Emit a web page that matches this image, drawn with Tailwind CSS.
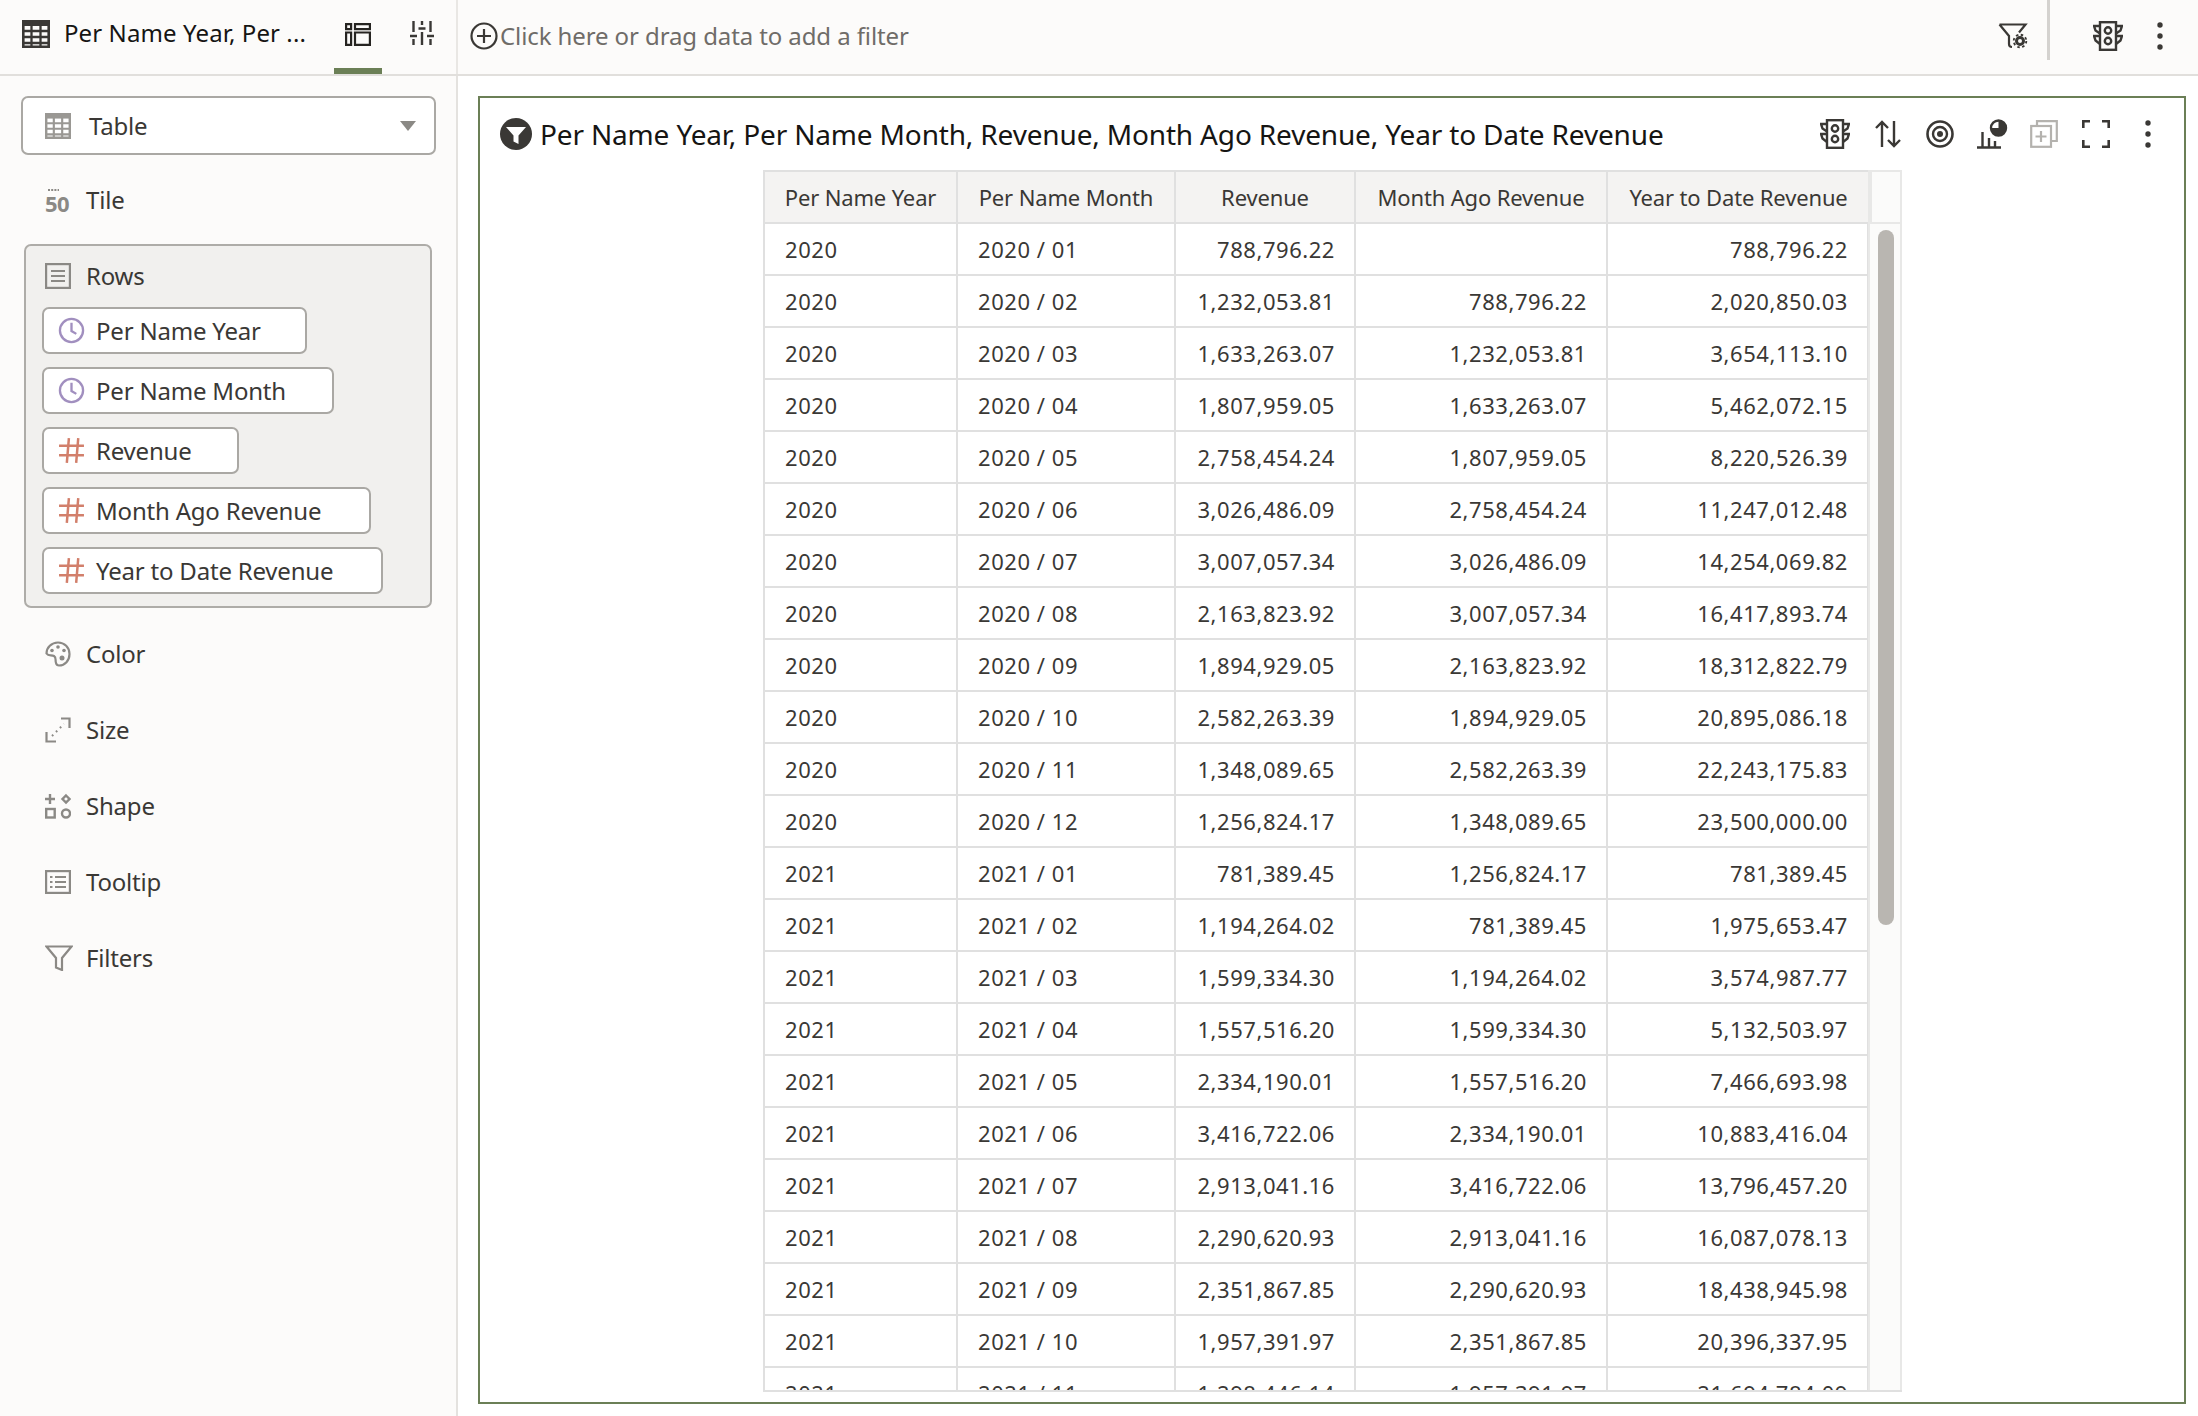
<!DOCTYPE html>
<html lang="en">
<head>
    <meta charset="UTF-8">
    <title>Per Name Year, Per Name Month, Revenue</title>
    <script src="https://cdn.jsdelivr.net/npm/@tailwindcss/browser@4"></script>
</head>
<body class="bg-white font-['Noto_Sans',sans-serif] text-[#3a3835]">
    <!-- shared icons -->
    <svg class="hidden">
        <symbol id="traffic" viewBox="0 0 30 30" fill="none" stroke="currentColor" stroke-width="2.400">
            <rect x="7" y="1.200" width="16" height="27.600"/>
            <circle cx="15" cy="9.500" r="3.200"/>
            <circle cx="15" cy="20" r="3.200"/>
            <path d="M7 5H1l1.500 4.500L7 12.500M23 5h6l-1.500 4.500L23 12.500M7 15H1l1.500 4.500L7 23M23 15h6l-1.500 4.500L23 23"/>
        </symbol>
        <symbol id="kebab" viewBox="0 0 6 28" fill="currentColor">
            <circle cx="3" cy="3" r="2.700"/><circle cx="3" cy="14" r="2.700"/><circle cx="3" cy="25" r="2.700"/>
        </symbol>
        <symbol id="clock" viewBox="0 0 28 28" fill="none" stroke="#a18fbf" stroke-width="2.400">
            <circle cx="14" cy="14" r="12"/><path d="M14 6v8.500l5 3"/>
        </symbol>
        <symbol id="hash" viewBox="0 0 26 26" fill="none" stroke="#d27f6b" stroke-width="2.400">
            <path d="M10.500 1L8.500 25M19.500 1l-2 24M1 8.500h24M1 17.500h24"/>
        </symbol>
        <symbol id="grid" viewBox="0 0 28 28" fill="none" stroke="currentColor">
            <path stroke-width="2.600" d="M1.300 1.300h25.400v25.400H1.300z"/>
            <path stroke-width="4" d="M1 4h26"/>
            <path stroke-width="2.300" d="M1 11h26M1 17h26M1 23h26M9.500 1v26M18.500 1v26"/>
        </symbol>
    </svg>

    <div class="flex h-[1416px] w-[2198px] flex-col overflow-hidden">
        <!-- top bar -->
        <header class="flex h-[76px] shrink-0 border-b-2 border-[#e1dfdc] bg-[#fcfbfa]">
            <div class="flex h-full w-[458px] shrink-0 items-center border-r-2 border-[#e9e7e4] pl-[22px]">
                <svg class="mb-[6px] h-[28px] w-[28px] text-[#3a3835]"><use href="#grid"/></svg>
                <span class="mb-[9px] ml-[14px] w-[270px] whitespace-nowrap text-[24px] leading-none tracking-[0.1px] text-[#161513]">Per Name Year, Per ...</span>
                <div class="flex h-full w-[48px] items-center justify-center border-b-[6px] border-[#6b7f56]">
                    <svg class="h-[23px] w-[26px]" viewBox="0 0 26 23" fill="none" stroke="#262421" stroke-width="2.200">
                        <path d="M1.100 1.100h5v5h-5zM10 1.100h14.900v5H10zM1.100 9.500h5v12.400h-5zM10 9.500h14.900v12.400H10z"/>
                    </svg>
                </div>
                <svg class="mb-[8px] ml-[28px] h-[24px] w-[24px]" viewBox="0 0 24 24" fill="none" stroke="#3a3835" stroke-width="2.400">
                    <path d="M3.500 0v11M3.500 18v6M0 15h7M12 0v4M12 11v13M8.500 7.500h7M20.500 0v11M20.500 18v6M17 15h7"/>
                </svg>
            </div>
            <div class="flex flex-1 items-center pb-[2px] pl-[12px]">
                <svg class="h-[28px] w-[28px]" viewBox="0 0 28 28" fill="none" stroke="#3a3835" stroke-width="2.200">
                    <circle cx="14" cy="14" r="12.500"/><path d="M14 7v14M7 14h14"/>
                </svg>
                <span class="ml-[2px] flex-1 text-[24px] leading-none tracking-[-0.1px] text-[#6f6c68]">Click here or drag data to add a filter</span>
                <svg class="h-[26px] w-[30px]" viewBox="0 0 30 26" fill="none" stroke="#3a3835" stroke-width="2.200">
                    <path d="M1.500 1.500h26l-6.500 8M1.500 1.500L11 13v8c0 2 1 3 3 3"/>
                    <circle cx="22" cy="18" r="3.500" stroke-width="3"/>
                    <circle cx="22" cy="18" r="6.300" stroke-width="1.800" stroke-dasharray="2.500 2.450"/>
                </svg>
                <div class="ml-[19px] h-[60px] w-[3px] self-start bg-[#d4d2cf]"></div>
                <svg class="ml-[43px] h-[30px] w-[30px] text-[#3a3835]"><use href="#traffic"/></svg>
                <svg class="ml-[34px] mr-[35px] h-[28px] w-[6px] text-[#3a3835]"><use href="#kebab"/></svg>
            </div>
        </header>

        <div class="flex min-h-0 flex-1">
            <!-- grammar panel -->
            <aside class="flex w-[458px] shrink-0 flex-col border-r-2 border-[#e4e2df] bg-[#fcfbfa] pt-[20px] text-[24px] tracking-[-0.2px] text-[#3a3835]">
                <div class="ml-[21px] flex h-[59px] w-[415px] items-center rounded-[7px] border-2 border-[#aaa8a4] bg-white pl-[22px] pr-[18px]">
                    <svg class="h-[26px] w-[26px] text-[#9a9894]"><use href="#grid"/></svg>
                    <span class="ml-[18px] flex-1">Table</span>
                    <svg class="h-[10px] w-[16px]" viewBox="0 0 16 10" fill="#8b8985"><path d="M0 0h16l-8 10z"/></svg>
                </div>

                <div class="ml-[45px] mt-[18px] flex h-[54px] items-center">
                    <svg class="h-[30px] w-[30px]" viewBox="0 0 30 30">
                        <path d="M3 5h11" stroke="#8b8985" stroke-width="2" stroke-dasharray="2 1.200"/>
                        <text x="0" y="27" font-family="Noto Sans" font-weight="700" font-size="22" letter-spacing="-0.500" fill="#8b8985">50</text>
                    </svg>
                    <span class="ml-[11px]">Tile</span>
                </div>

                <section class="ml-[24px] mt-[17px] w-[408px] rounded-[7px] border-2 border-[#aeaca8] bg-[#f1f0ee] px-[16px] pb-[12px] pt-[3px]">
                    <div class="mb-[4px] flex h-[54px] items-center pl-[3px]">
                        <svg class="h-[26px] w-[26px]" viewBox="0 0 26 26" fill="none" stroke="#8b8985" stroke-width="2.200">
                            <rect x="1.100" y="1.100" width="23.800" height="23.800"/><path d="M6 8h14M6 13h14M6 18h14"/>
                        </svg>
                        <span class="ml-[15px]">Rows</span>
                    </div>
                    <div class="flex flex-col gap-[13px]">
                        <div class="flex h-[47px] w-[265px] items-center rounded-[7px] border-2 border-[#aaa8a4] bg-white pl-[14px]">
                            <svg class="h-[27px] w-[27px]"><use href="#clock"/></svg><span class="ml-[11px] whitespace-nowrap">Per Name Year</span>
                        </div>
                        <div class="flex h-[47px] w-[292px] items-center rounded-[7px] border-2 border-[#aaa8a4] bg-white pl-[14px]">
                            <svg class="h-[27px] w-[27px]"><use href="#clock"/></svg><span class="ml-[11px] whitespace-nowrap">Per Name Month</span>
                        </div>
                        <div class="flex h-[47px] w-[197px] items-center rounded-[7px] border-2 border-[#aaa8a4] bg-white pl-[14px]">
                            <svg class="h-[27px] w-[27px]"><use href="#hash"/></svg><span class="ml-[11px] whitespace-nowrap">Revenue</span>
                        </div>
                        <div class="flex h-[47px] w-[329px] items-center rounded-[7px] border-2 border-[#aaa8a4] bg-white pl-[14px]">
                            <svg class="h-[27px] w-[27px]"><use href="#hash"/></svg><span class="ml-[11px] whitespace-nowrap">Month Ago Revenue</span>
                        </div>
                        <div class="flex h-[47px] w-[341px] items-center rounded-[7px] border-2 border-[#aaa8a4] bg-white pl-[14px]">
                            <svg class="h-[27px] w-[27px]"><use href="#hash"/></svg><span class="ml-[11px] whitespace-nowrap">Year to Date Revenue</span>
                        </div>
                    </div>
                </section>

                <nav class="ml-[45px] mt-[19px] flex flex-col gap-[22px]">
                    <div class="flex h-[54px] items-center">
                        <svg class="h-[26px] w-[26px]" viewBox="0 0 26 26" fill="none" stroke="#8b8985" stroke-width="2.200">
                            <path d="M13 1.500C6.500 1.500 1.500 6.500 1.500 12.500c2 3 5 1 7.500 2.500s1 4 2 7c.5 2 2 2.500 3 2.500 6 0 10.500-5 10.500-11.500S19.500 1.500 13 1.500z"/>
                            <circle cx="7" cy="9.500" r="1.800" fill="#8b8985" stroke="none"/><circle cx="13" cy="6" r="1.800" fill="#8b8985" stroke="none"/>
                            <circle cx="19" cy="9.500" r="1.800" fill="#8b8985" stroke="none"/><circle cx="17" cy="17" r="2.500" fill="#8b8985" stroke="none"/>
                        </svg>
                        <span class="ml-[15px]">Color</span>
                    </div>
                    <div class="flex h-[54px] items-center">
                        <svg class="h-[26px] w-[26px]" viewBox="0 0 26 26" fill="none" stroke="#8b8985" stroke-width="2.200">
                            <path d="M16 1.500h8.500V11M1.500 15v9.500H11"/>
                            <path d="M7 19l12-12" stroke-width="2" stroke-dasharray="1.800 3.800"/>
                        </svg>
                        <span class="ml-[15px]">Size</span>
                    </div>
                    <div class="flex h-[54px] items-center">
                        <svg class="h-[26px] w-[26px]" viewBox="0 0 26 26" fill="none" stroke="#8b8985" stroke-width="2.400">
                            <path d="M0 6h10M5 1v10M21 2.500l3.500 3.500-3.500 3.500-3.500-3.500z"/>
                            <rect x="1.200" y="16" width="8.500" height="8.500"/><circle cx="21" cy="20.500" r="4"/>
                        </svg>
                        <span class="ml-[15px]">Shape</span>
                    </div>
                    <div class="flex h-[54px] items-center">
                        <svg class="h-[26px] w-[26px]" viewBox="0 0 26 24" fill="none" stroke="#8b8985" stroke-width="2.200">
                            <rect x="1.100" y="1.100" width="23.800" height="21.800"/>
                            <path d="M10 7h11M10 12h11M10 17h11"/><path d="M5 7h2.500M5 12h2.500M5 17h2.500"/>
                        </svg>
                        <span class="ml-[15px]">Tooltip</span>
                    </div>
                    <div class="flex h-[54px] items-center">
                        <svg class="h-[26px] w-[28px]" viewBox="0 0 28 26" fill="none" stroke="#8b8985" stroke-width="2.200">
                            <path d="M1.500 1.500h25l-9.500 11.500v12l-6-2.500v-9.500z"/>
                        </svg>
                        <span class="ml-[13px]">Filters</span>
                    </div>
                </nav>
            </aside>

            <!-- canvas -->
            <main class="min-w-0 flex-1 pl-[20px] pr-[12px] pt-[20px]">
                <div class="flex h-[1308px] flex-col border-2 border-[#6b7f56] bg-white">
                    <div class="flex h-[72px] shrink-0 items-center pl-[20px]">
                        <svg class="h-[32px] w-[32px]" viewBox="0 0 32 32">
                            <circle cx="16" cy="16" r="16" fill="#3a3835"/>
                            <path d="M6 9h20l-7.500 8.500V26l-5-2.500v-6z" fill="#fff"/>
                        </svg>
                        <h1 class="ml-[8px] flex-1 whitespace-nowrap text-[28px] leading-none tracking-[-0.16px] text-[#161513]">Per Name Year, Per Name Month, Revenue, Month Ago Revenue, Year to Date Revenue</h1>
                        <svg class="h-[30px] w-[30px] text-[#3a3835]"><use href="#traffic"/></svg>
                        <svg class="ml-[25px] h-[28px] w-[26px]" viewBox="0 0 26 28" fill="none" stroke="#3a3835" stroke-width="2.400">
                            <path d="M7 27V2M1 8l6-6 6 6M19 1v25M13 20l6 6 6-6"/>
                        </svg>
                        <svg class="ml-[25px] h-[28px] w-[28px]" viewBox="0 0 28 28" fill="none" stroke="#3a3835">
                            <circle cx="14" cy="14" r="12.500" stroke-width="2.600"/><circle cx="14" cy="14" r="7" stroke-width="2.400"/><circle cx="14" cy="14" r="3" fill="#3a3835" stroke="none"/>
                        </svg>
                        <svg class="ml-[23px] h-[30px] w-[31px]" viewBox="0 0 31 30" fill="none" stroke="#3a3835" stroke-width="2.400">
                            <path d="M0 28.500h24M5.500 28V13M12 28V19M18 28v-6"/>
                            <circle cx="21.500" cy="9" r="7.500"/>
                            <path d="M21.500 9V1.500a7.500 7.500 0 1 1-7.500 7.500z" fill="#3a3835" stroke="none"/>
                        </svg>
                        <svg class="ml-[22px] h-[28px] w-[28px]" viewBox="0 0 28 28" fill="none" stroke="#b4b2ae" stroke-width="2.200">
                            <path d="M7 6V1.200h19.800V21H21"/><rect x="1.200" y="6" width="19.800" height="20.800"/><path d="M11 11v11M5.500 16.500h11"/>
                        </svg>
                        <svg class="ml-[24px] h-[28px] w-[28px]" viewBox="0 0 28 28" fill="none" stroke="#3a3835" stroke-width="2.600">
                            <path d="M1.300 8V1.300H8M20 1.300h6.700V8M1.300 20v6.700H8M20 26.700h6.700V20"/>
                        </svg>
                        <svg class="ml-[35px] mr-[33px] h-[28px] w-[6px] text-[#3a3835]"><use href="#kebab"/></svg>
                    </div>

                    <!-- table view, cut off by the frame's height like the scrolling original -->
                    <div class="relative ml-[283px] h-[1222px] w-[1139px] overflow-hidden border-b-2 border-[#e0e0e0] bg-[#fbfbfa]">
                        <div id="table" class="w-[1106px] border-l-2 border-[#e0e0e0] text-[22px] text-[#3a3835]"></div>
                        <div class="absolute left-[1105px] top-0 h-full w-[34px] border-x-2 border-[#e8e8e7]"></div>
                        <div class="absolute left-[1107px] top-0 h-[54px] w-[32px] border-2 border-[#e8e8e7] bg-[#fbfbfa]"></div>
                        <div class="absolute left-[1115px] top-[60px] h-[695px] w-[16px] rounded-[8px] bg-[#b9b6b1]"></div>
                    </div>
                </div>
            </main>
        </div>
    </div>

    <script>
        const rows = [
            ['2020', '2020 / 01', '788,796.22', '', '788,796.22'],
            ['2020', '2020 / 02', '1,232,053.81', '788,796.22', '2,020,850.03'],
            ['2020', '2020 / 03', '1,633,263.07', '1,232,053.81', '3,654,113.10'],
            ['2020', '2020 / 04', '1,807,959.05', '1,633,263.07', '5,462,072.15'],
            ['2020', '2020 / 05', '2,758,454.24', '1,807,959.05', '8,220,526.39'],
            ['2020', '2020 / 06', '3,026,486.09', '2,758,454.24', '11,247,012.48'],
            ['2020', '2020 / 07', '3,007,057.34', '3,026,486.09', '14,254,069.82'],
            ['2020', '2020 / 08', '2,163,823.92', '3,007,057.34', '16,417,893.74'],
            ['2020', '2020 / 09', '1,894,929.05', '2,163,823.92', '18,312,822.79'],
            ['2020', '2020 / 10', '2,582,263.39', '1,894,929.05', '20,895,086.18'],
            ['2020', '2020 / 11', '1,348,089.65', '2,582,263.39', '22,243,175.83'],
            ['2020', '2020 / 12', '1,256,824.17', '1,348,089.65', '23,500,000.00'],
            ['2021', '2021 / 01', '781,389.45', '1,256,824.17', '781,389.45'],
            ['2021', '2021 / 02', '1,194,264.02', '781,389.45', '1,975,653.47'],
            ['2021', '2021 / 03', '1,599,334.30', '1,194,264.02', '3,574,987.77'],
            ['2021', '2021 / 04', '1,557,516.20', '1,599,334.30', '5,132,503.97'],
            ['2021', '2021 / 05', '2,334,190.01', '1,557,516.20', '7,466,693.98'],
            ['2021', '2021 / 06', '3,416,722.06', '2,334,190.01', '10,883,416.04'],
            ['2021', '2021 / 07', '2,913,041.16', '3,416,722.06', '13,796,457.20'],
            ['2021', '2021 / 08', '2,290,620.93', '2,913,041.16', '16,087,078.13'],
            ['2021', '2021 / 09', '2,351,867.85', '2,290,620.93', '18,438,945.98'],
            ['2021', '2021 / 10', '1,957,391.97', '2,351,867.85', '20,396,337.95'],
            ['2021', '2021 / 11', '1,298,446.14', '1,957,391.97', '21,694,784.09']
        ];
        const heads = ['Per Name Year', 'Per Name Month', 'Revenue', 'Month Ago Revenue', 'Year to Date Revenue'];

        const head = heads.map(h =>
            `<div class="flex items-center justify-center whitespace-nowrap border-r-2 border-[#e0e0e0] tracking-[-0.15px]">${h}</div>`
        ).join('');
        const body = rows.map(r => `
            <div class="grid h-[52px] grid-cols-[193px_218px_180px_252px_261px] border-b-2 border-[#e0e0e0] bg-white">
                ${r.map((c, i) => `<div class="flex items-center whitespace-pre border-r-2 border-[#e0e0e0] pl-[20px] pr-[19px] tracking-[0.55px] ${i > 1 ? 'justify-end' : ''}">${c}</div>`).join('')}
            </div>`).join('');

        document.getElementById('table').innerHTML = `
            <div class="grid h-[54px] grid-cols-[193px_218px_180px_252px_263px] border-y-2 border-[#e0e0e0] bg-[#f4f3f2]">${head}</div>
            ${body}`;
    </script>
</body>
</html>
